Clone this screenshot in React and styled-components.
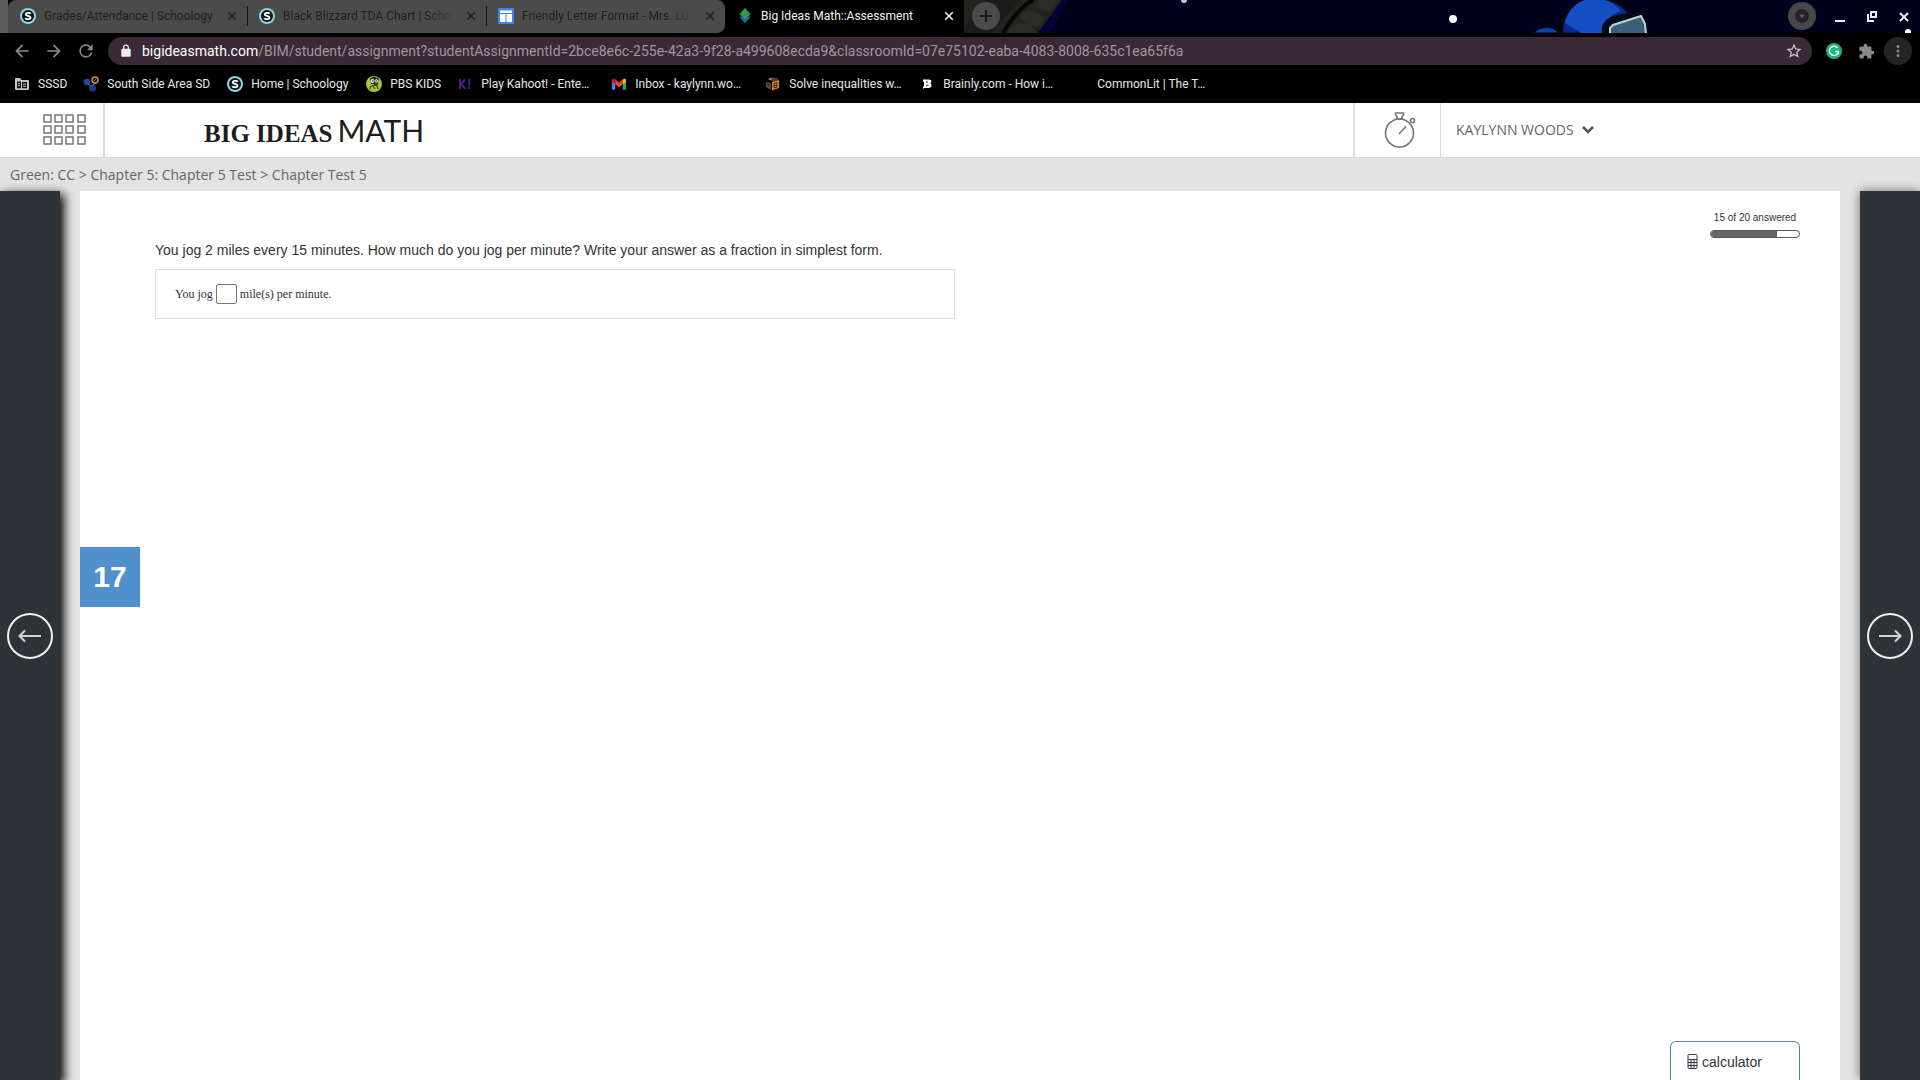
import React from "react";
import styled, { createGlobalStyle, css } from "styled-components";

const GlobalStyle = createGlobalStyle`
  *, *::before, *::after { box-sizing: border-box; }
  html, body, #root { height: 100%; }
  body {
    margin: 0;
    overflow: hidden;
    background: #e3e3e3;
    font-family: "Liberation Sans", Arial, sans-serif;
  }
  button { font: inherit; color: inherit; cursor: pointer; }
  svg { flex: none; }
`;

const Screen = styled.div`
  display: flex;
  flex-direction: column;
  height: 100%;
`;

/* ---------- browser chrome ---------- */

const Chrome = styled.div`
  flex: none;
  background: #000;
  color: #e4e4e4;
  font-family: Roboto, sans-serif;
  font-size: 12px;
`;

const TabStrip = styled.div`
  position: relative;
  display: flex;
  align-items: center;
  height: 33px;
  overflow: hidden;
  background: #00001c;
`;

const Wallpaper = styled.svg`
  position: absolute;
  top: 0;
  left: 0;
  width: 1920px;
  height: 33px;
`;

const TabList = styled.div`
  position: relative;
  display: flex;
  height: 33px;
  padding-left: 8px;
  background: linear-gradient(to right, #5c5c5c 8px, #000 8px);
`;

const Tab = styled.div`
  display: flex;
  align-items: center;
  gap: 8px;
  width: 239px;
  height: 33px;
  padding: 0 7px 2px 12px;
  background: ${(p) => (p.$active ? "#000" : "#4b4b4b")};
  color: ${(p) => (p.$active ? "#f2f2f2" : "#1f1f1f")};
  border-radius: ${(p) => (p.$first ? "8px 0 0 0" : p.$last ? "0 8px 8px 0" : "0")};
`;

const TabDivider = styled.span`
  width: 1px;
  height: 20px;
  margin: 6px -1px 0 0;
  background: #151515;
  z-index: 1;
`;

const TabTitle = styled.span`
  flex: 1;
  min-width: 0;
  white-space: nowrap;
  line-height: 16px;
  ${(p) => p.$faded && css`mask-image: linear-gradient(to right, #000 calc(100% - 28px), transparent);`}
`;

const IconButton = styled.button`
  display: flex;
  flex: none;
  align-items: center;
  justify-content: center;
  width: ${(p) => p.$size || 32}px;
  height: ${(p) => p.$size || 32}px;
  margin: 0 ${(p) => p.$inset || 0}px;
  padding: 0;
  border: 0;
  border-radius: 50%;
  background: ${(p) => p.$fill || "transparent"};
`;

const StripEnd = styled.div`
  position: relative;
  display: flex;
  flex: 1;
  align-items: center;
  height: 33px;
  padding: 0 0 1px 8px;
`;

const WindowControls = styled.div`
  display: flex;
  align-items: center;
  margin-left: auto;
  color: #f0f0f8;
`;

const ProfileGap = styled.span`
  width: 8px;
`;

const Toolbar = styled.div`
  display: flex;
  align-items: center;
  height: 36px;
  padding: 0 6px;
  color: #8a8a8a;
`;

const AddressBar = styled.div`
  display: flex;
  flex: 1;
  align-items: center;
  gap: 9px;
  height: 28px;
  margin: 0 6px;
  padding: 0 2px 0 11px;
  border-radius: 14px;
  background: #392a36;
  color: #cfc8cd;
`;

const Address = styled.div`
  flex: 1;
  font-size: 14px;
  line-height: 20px;
  color: #a0969d;
  white-space: nowrap;
  outline: 0;
`;

const Host = styled.span`
  color: #fff;
`;

const BookmarkBar = styled.nav`
  display: flex;
  gap: 16px;
  height: 34px;
  padding: 0 14px 4px;
`;

const Bookmark = styled.a`
  display: flex;
  align-items: center;
  gap: 8px;
  min-width: ${(p) => p.$width}px;
  color: #e6e6e6;
  text-decoration: none;
  white-space: nowrap;
`;

/* ---------- site header ---------- */

const SiteHeader = styled.header`
  display: flex;
  flex: none;
  height: 54px;
  background: #fff;
  color: #666;
`;

const MenuButton = styled.button`
  display: flex;
  align-items: center;
  justify-content: flex-end;
  width: 105px;
  padding: 0 17px 2px 0;
  border: 0;
  border-right: 2px solid #ddd;
  background: none;
`;

const Brand = styled.a`
  display: flex;
  flex: 1;
  align-items: baseline;
  gap: 5px;
  padding: 7px 0 0 99px;
  color: #1d1d1d;
  text-decoration: none;
  white-space: nowrap;
`;

const BrandBold = styled.span`
  font: bold 25px/40px "Liberation Serif", serif;
`;

const BrandLight = styled.span`
  font: 400 30px/40px Lato, sans-serif;
`;

const TimerButton = styled.button`
  display: flex;
  align-items: center;
  justify-content: center;
  width: 88px;
  padding: 0 0 0 4px;
  border: 0;
  border-left: 2px solid #ddd;
  border-right: 1px solid #ddd;
  background: none;
`;

const UserButton = styled.button`
  display: flex;
  align-items: center;
  gap: 8px;
  width: 479px;
  padding: 0 0 0 15px;
  border: 0;
  background: none;
  && {
    font: 14px/20px "Open Sans", sans-serif;
    color: #666;
  }
`;

const Breadcrumb = styled.nav`
  flex: none;
  height: 34px;
  padding: 7px 10px 0;
  border-top: 1px solid #d8d8d8;
  background: #e3e3e3;
  font: 14px/20px "Open Sans", sans-serif;
  color: #666;
`;

/* ---------- assessment ---------- */

const Stage = styled.div`
  display: flex;
  flex: 1;
  min-height: 0;
  gap: 20px;
  background: #e3e3e3;
`;

const SideNav = styled.div`
  display: flex;
  flex: none;
  align-items: center;
  justify-content: center;
  width: 60px;
  background: #2e3337;
  box-shadow: ${(p) => (p.$side === "left" ? "3px 4px 10px 1px #000" : "0 0 10px rgba(0, 0, 0, 0.5)")};
`;

const ArrowButton = styled.button`
  display: flex;
  align-items: center;
  justify-content: center;
  width: 46px;
  height: 46px;
  padding: 0;
  border: 2px solid #f0f0f0;
  border-radius: 50%;
  background: none;
  && {
    color: #d4d4d4;
  }
`;

const Sheet = styled.main`
  display: flex;
  flex: 1;
  background: #fff;
  z-index: 1;
`;

const QuestionNumber = styled.div`
  display: flex;
  align-items: center;
  justify-content: center;
  width: 60px;
  height: 60px;
  margin-top: 356px;
  background: #4f90cd;
  color: #fff;
  font-size: 30px;
  font-weight: bold;
`;

const QuestionArea = styled.section`
  flex: 1;
  padding: 49px 0 0 15px;
`;

const Prompt = styled.p`
  margin: 0 0 9px;
  font-size: 14px;
  line-height: 20px;
  color: #333;
`;

const AnswerBox = styled.label`
  display: flex;
  align-items: center;
  gap: 3px;
  width: 800px;
  height: 50px;
  padding-left: 19px;
  border: 1px solid #ddd;
  font: 12px/16px "Liberation Serif", serif;
  color: #333;
`;

const AnswerInput = styled.input`
  width: 21px;
  height: 20px;
  padding: 0 2px;
  border: 1px solid #777;
  border-radius: 2px;
  background: #fff;
  font: inherit;
`;

const Aside = styled.aside`
  display: flex;
  flex-direction: column;
  align-items: flex-end;
  justify-content: space-between;
  padding: 20px 40px 0 0;
`;

const Progress = styled.div`
  width: 90px;
  font-size: 10px;
  line-height: 14px;
  text-align: center;
  color: #333;
  white-space: nowrap;
`;

const ProgressTrack = styled.div`
  height: 8px;
  margin-top: 5px;
  overflow: hidden;
  border: 1px solid #555;
  border-radius: 4px;
`;

const ProgressFill = styled.div`
  height: 100%;
  background: #666;
`;

const CalculatorButton = styled.button`
  display: flex;
  align-items: center;
  gap: 4px;
  width: 130px;
  height: 39px;
  padding: 1px 0 0 16px;
  border: 1px solid #5087a8;
  border-bottom: 0;
  border-radius: 6px 6px 0 0;
  background: #fff;
  && {
    font-size: 14px;
    color: #2f3640;
  }
`;

/* ---------- drawings ---------- */

const SchoologyIcon = () => (
  <svg width="16" height="16" viewBox="0 0 16 16" aria-hidden="true">
    <circle cx="8" cy="8" r="8" fill="#8fd3e8" />
    <circle cx="8" cy="8" r="6" fill="#0b1118" />
    <path d="M10.700 5.700C10 4.600 5.800 4.300 5.800 6.400c0 2 4.700 1 4.700 3.200 0 2.200-4.500 1.900-5.300.5" fill="none" stroke="#fff" strokeWidth="1.900" />
  </svg>
);

const SitesIcon = () => (
  <svg width="16" height="16" viewBox="0 0 16 16" aria-hidden="true">
    <rect width="16" height="16" rx="1" fill="#4285e8" />
    <path d="M2 2.500h12v2.500H2zM2 6h5.500v8H2zM8.500 6H14v8H8.500z" fill="#fff" />
  </svg>
);

const BigIdeasIcon = () => (
  <svg width="16" height="16" viewBox="0 0 16 16" aria-hidden="true">
    <path d="M2.500 9.500h11L8 15.500z" fill="#123f8f" />
    <path d="M2.500 8.500h11L8 15z" fill="#1b62b0" />
    <path d="M8 0l5.500 6L8 11.500 2.500 6z" fill="#2f9a48" />
  </svg>
);

const CloseIcon = () => (
  <svg width="16" height="16" viewBox="0 0 16 16" fill="none" stroke="currentColor" strokeWidth="1.600" aria-hidden="true">
    <path d="M4.200 4.200l7.600 7.600M11.800 4.200l-7.600 7.600" />
  </svg>
);

const MaterialIcon = ({ d, size = 18 }) => (
  <svg width={size} height={size} viewBox="0 0 24 24" fill="currentColor" aria-hidden="true">
    <path d={d} />
  </svg>
);

const BACK = "M20 11H7.830l5.590-5.590L12 4l-8 8 8 8 1.410-1.410L7.830 13H20v-2z";
const FORWARD = "M12 4l-1.410 1.410L16.170 11H4v2h12.170l-5.580 5.590L12 20l8-8z";
const RELOAD = "M17.650 6.350A7.960 7.960 0 0 0 12 4a8 8 0 1 0 7.730 10h-2.080A6 6 0 1 1 12 6c1.660 0 3.140.690 4.220 1.780L13 11h7V4l-2.350 2.350z";
const LOCK = "M18 8h-1V6A5 5 0 0 0 7 6v2H6a2 2 0 0 0-2 2v10a2 2 0 0 0 2 2h12a2 2 0 0 0 2-2V10a2 2 0 0 0-2-2zM9 6a3 3 0 0 1 6 0v2H9V6z";
const STAR = "M22 9.240l-7.190-.620L12 2 9.190 8.630 2 9.240l5.460 4.730L5.820 21 12 17.270 18.180 21l-1.630-7.030L22 9.240zM12 15.400l-3.760 2.270 1-4.280-3.320-2.880 4.380-.380L12 6.100l1.710 4.040 4.380.380-3.320 2.880 1 4.280L12 15.400z";
const PUZZLE = "M20.500 11H19V7a2 2 0 0 0-2-2h-4V3.500a2.500 2.500 0 0 0-5 0V5H4a2 2 0 0 0-2 2v3.800h1.500a2.700 2.700 0 0 1 0 5.400H2V20a2 2 0 0 0 2 2h3.800v-1.500a2.700 2.700 0 0 1 5.400 0V22H17a2 2 0 0 0 2-2v-4h1.500a2.500 2.500 0 0 0 0-5z";
const MORE = "M12 8a2 2 0 1 0 0-4 2 2 0 0 0 0 4zm0 2a2 2 0 1 0 0 4 2 2 0 0 0 0-4zm0 6a2 2 0 1 0 0 4 2 2 0 0 0 0-4z";

const FolderIcon = () => (
  <svg width="16" height="16" viewBox="0 0 16 16" aria-hidden="true">
    <path d="M1 3.200c0-.7.500-1.200 1.200-1.200H6l1.500 2h6.300c.7 0 1.200.5 1.200 1.200v7.600c0 .7-.5 1.200-1.200 1.200H2.200c-.7 0-1.200-.5-1.200-1.200z" fill="#c4c4c4" />
    <path d="M3 5.500h4v6.700H3zM8 6h5v6.200H8z" fill="#111" />
    <path d="M4 7h2v1H4zM4 9h2v1H4zM9 7.500h3v1H9zM9 9.800h3v1H9zM7 5.500h1v7H7z" fill="#c4c4c4" />
  </svg>
);

const DistrictIcon = () => (
  <svg width="16" height="16" viewBox="0 0 16 16" aria-hidden="true">
    <circle cx="4" cy="6" r="3.300" fill="#1c4aa6" />
    <circle cx="9.500" cy="12" r="3.500" fill="#163f93" />
    <circle cx="12" cy="4" r="3" fill="none" stroke="#d08a4c" strokeWidth="1.500" />
    <path d="M10.500 5.500l3-3M5 8l3 2M11 7l-1 3" stroke="#a6734d" strokeWidth="1" />
  </svg>
);

const PbsIcon = () => (
  <svg width="16" height="16" viewBox="0 0 16 16" aria-hidden="true">
    <circle cx="8" cy="8" r="8" fill="#a5c63b" />
    <path d="M4 2.500l4-2 5 2-1 5.500H5z" fill="#27301b" />
    <circle cx="6.500" cy="5" r="1.900" fill="#fff" />
    <circle cx="10.500" cy="5" r="1.700" fill="#fff" />
    <circle cx="6.800" cy="5" r=".8" />
    <circle cx="10.200" cy="5" r=".8" />
    <path d="M4 13c0-5 8-5 8 0M7 10l2 3M8 8l4 1" stroke="#35451a" strokeWidth="1.200" fill="none" />
  </svg>
);

const KahootIcon = () => (
  <svg width="16" height="16" viewBox="0 0 16 16" fill="none" stroke="#482087" strokeWidth="2" aria-hidden="true">
    <path d="M3 3v10M8 3.500L4 8l4.500 5M12.500 2.500l-.5 7M11.500 11v2" />
  </svg>
);

const GmailIcon = () => (
  <svg width="16" height="16" viewBox="0 0 16 16" aria-hidden="true">
    <path d="M1 4.500v8.300c0 .5.400.9.900.9H4.200V7z" fill="#4285f4" />
    <path d="M15 4.500v8.300c0 .5-.4.9-.9.9h-2.300V7z" fill="#34a853" />
    <path d="M4.200 8.300V3.500L8 6.400l3.800-2.900v4.800L8 11.200z" fill="#ea4335" />
    <path d="M1 4.200C1 2.500 2.800 2.200 4.200 3.500v4.800L1 6z" fill="#c5221f" />
    <path d="M15 4.200c0-1.700-1.800-2-3.200-.7v4.800L15 6z" fill="#fbbc04" />
  </svg>
);

const CubeIcon = () => (
  <svg width="16" height="16" viewBox="0 0 16 16" aria-hidden="true">
    <path d="M2 3l6-2 6 2-5 3z" fill="#4c3b2c" />
    <path d="M7 6l7-2v8l-7 2.500z" fill="#c98b3c" />
    <path d="M1 6l5 1v7l-5-3z" fill="#5d452e" />
    <path d="M9 7.500l3-.8v4.500l-3 .8zM9 9.500h3M2 8l3 1" stroke="#38240f" fill="none" />
    <path d="M4 3h3" stroke="#c8b79c" />
  </svg>
);

const BrainlyIcon = () => (
  <svg width="16" height="16" viewBox="0 0 16 16" aria-hidden="true">
    <path d="M4 3.500h6c3 0 3 3 1.200 4C13.500 8.500 13 12 9.500 12H5l-1 1V11l1-1V6L4 5.500z" fill="#fff" />
    <path d="M7 6h2M7 9.300h2.500" stroke="#222" />
  </svg>
);

const BlankIcon = () => <svg width="16" height="16" aria-hidden="true" />;

const tabs = [
  { title: "Grades/Attendance | Schoology", Icon: SchoologyIcon },
  { title: "Black Blizzard TDA Chart | Scho", Icon: SchoologyIcon, faded: true },
  { title: "Friendly Letter Format - Mrs. Lun", Icon: SitesIcon, faded: true },
  { title: "Big Ideas Math::Assessment", Icon: BigIdeasIcon, active: true },
];

const bookmarks = [
  { label: "SSSD", Icon: FolderIcon, width: 53 },
  { label: "South Side Area SD", Icon: DistrictIcon, width: 128 },
  { label: "Home | Schoology", Icon: SchoologyIcon, width: 123 },
  { label: "PBS KIDS", Icon: PbsIcon, width: 75 },
  { label: "Play Kahoot! - Ente…", Icon: KahootIcon, width: 138 },
  { label: "Inbox - kaylynn.wo…", Icon: GmailIcon, width: 138 },
  { label: "Solve inequalities w…", Icon: CubeIcon, width: 138 },
  { label: "Brainly.com - How i…", Icon: BrainlyIcon, width: 138 },
  { label: "CommonLit | The T…", Icon: BlankIcon, width: 138 },
];

const NightSky = () => (
  <Wallpaper viewBox="0 0 1920 33" preserveAspectRatio="xMinYMin slice" aria-hidden="true">
    <path d="M960 0h102l-24 33h-78z" fill="#22231f" />
    <path d="M962 33l12-20 12-13h34l-28 33z" fill="#1b1c19" />
    <path d="M1003 33c8-14 18-26 30-33" stroke="#060605" strokeWidth="4" fill="none" />
    <path d="M1013 26c8-5 18-4 24 7h-30z" fill="#2b2d25" />
    <path d="M1021 15c4-5 10-5 16-2 6 2 9 4 5 9-3 6-6 6-11 3-6-3-13-4-10-10z" fill="#2b2d25" />
    <path d="M1034 3l4-3h20c-2 6-6 11-9 12-6-4-15-3-15-9z" fill="#2b2d25" />
    <path d="M1062 0h6l-18 33h-12z" fill="#020238" />
    <circle cx="1184" cy="0" r="3" fill="#c8c8dc" />
    <circle cx="1453" cy="19" r="4" fill="#fff" />
    <circle cx="1908" cy="32" r="3" fill="#fff" />
    <path d="M1532 34c6-10 24-10 28 0z" fill="#0f40ae" stroke="#020512" strokeWidth="3" />
    <path d="M1562 34c-2-20 12-35 34-36 18 0 30 8 36 20l-20 16z" fill="#0a2a8f" stroke="#020512" strokeWidth="3" />
    <path d="M1565 23c4-18 18-26 34-24 12 2 18 7 22 12-12 4-16 10-18 22h-22z" fill="#1450c4" />
    <path d="M1602 34c-2-12 6-18 20-20l16-2c8 6 11 13 11 22z" fill="#020a18" />
    <path d="M1610 34v-6l3-3 28-9 4 5 1 13z" fill="#3c6076" />
    <path d="M1610 34v-6l3-3 28-9 4 8 1 10" fill="none" stroke="#b8d5d4" strokeWidth="2" />
  </Wallpaper>
);

export default function App() {
  return (
    <Screen>
      <GlobalStyle />
      <Chrome>
        <TabStrip>
          <NightSky />
          <TabList role="tablist">
            {tabs.map(({ title, Icon, active, faded }, i) => (
              <React.Fragment key={title}>
                <Tab role="tab" aria-selected={!!active} $active={active} $first={i === 0} $last={i === 2}>
                  <Icon />
                  <TabTitle $faded={faded}>{title}</TabTitle>
                  <IconButton $size={16} aria-label="Close tab"><CloseIcon /></IconButton>
                </Tab>
                {i < 2 && <TabDivider />}
              </React.Fragment>
            ))}
          </TabList>
          <StripEnd>
            <IconButton $size={28} $fill="#4b4b4b" aria-label="New tab">
              <svg width="14" height="14" viewBox="0 0 14 14" stroke="#1b1b1b" strokeWidth="2" aria-hidden="true">
                <path d="M7 1v12M1 7h12" />
              </svg>
            </IconButton>
            <WindowControls>
              <IconButton $size={28} $fill="#484848" aria-label="Search tabs">
                <svg width="14" height="14" viewBox="0 0 14 14" aria-hidden="true">
                  <circle cx="7" cy="7" r="7" fill="#2a2028" />
                  <path d="M4 5.500h6L7 9z" fill="#665d64" />
                </svg>
              </IconButton>
              <ProfileGap />
              <IconButton aria-label="Minimize">
                <svg width="12" height="12" viewBox="0 0 12 12" aria-hidden="true">
                  <path d="M1 10h10v2H1z" fill="currentColor" />
                </svg>
              </IconButton>
              <IconButton aria-label="Restore">
                <svg width="12" height="12" viewBox="0 0 12 12" fill="none" stroke="currentColor" strokeWidth="2" aria-hidden="true">
                  <path d="M5 2h5v5H5zM2 4v7h6" />
                </svg>
              </IconButton>
              <IconButton aria-label="Close window">
                <svg width="12" height="12" viewBox="0 0 12 12" stroke="currentColor" strokeWidth="2" aria-hidden="true">
                  <path d="M2 3l8 8M10 3l-8 8" />
                </svg>
              </IconButton>
            </WindowControls>
          </StripEnd>
        </TabStrip>

        <Toolbar>
          <IconButton aria-label="Back"><MaterialIcon d={BACK} size={20} /></IconButton>
          <IconButton aria-label="Forward"><MaterialIcon d={FORWARD} size={20} /></IconButton>
          <IconButton aria-label="Reload"><MaterialIcon d={RELOAD} size={20} /></IconButton>
          <AddressBar>
            <svg width="14" height="14" viewBox="0 0 24 24" fill="#f0eef0" aria-hidden="true"><path d={LOCK} /></svg>
            <Address role="textbox" aria-label="Address" contentEditable suppressContentEditableWarning spellCheck={false}>
              <Host>bigideasmath.com</Host>
              /BIM/student/assignment?studentAssignmentId=2bce8e6c-255e-42a3-9f28-a499608ecda9&amp;classroomId=07e75102-eaba-4083-8008-635c1ea65f6a
            </Address>
            <IconButton aria-label="Bookmark this page"><MaterialIcon d={STAR} size={18} /></IconButton>
          </AddressBar>
          <IconButton aria-label="Grammarly">
            <svg width="16" height="16" viewBox="0 0 16 16" aria-hidden="true">
              <circle cx="8" cy="8" r="8" fill="#18b583" />
              <path d="M11.500 4.900A4.600 4.600 0 1 0 12.500 8.500H9M12.400 8.500v3" fill="none" stroke="#fff" strokeWidth="1.400" />
            </svg>
          </IconButton>
          <IconButton aria-label="Extensions"><MaterialIcon d={PUZZLE} size={17} /></IconButton>
          <IconButton $size={28} $inset={2} $fill="#242424" aria-label="Menu"><MaterialIcon d={MORE} size={18} /></IconButton>
        </Toolbar>

        <BookmarkBar aria-label="Bookmarks">
          {bookmarks.map(({ label, Icon, width }) => (
            <Bookmark href="#" key={label} $width={width}><Icon />{label}</Bookmark>
          ))}
        </BookmarkBar>
      </Chrome>

      <SiteHeader>
        <MenuButton aria-label="Menu">
          <svg width="43" height="31" viewBox="0 0 43 31" fill="none" stroke="#777" strokeWidth="1.500" aria-hidden="true">
            {[0, 11, 22].map((y) => [0, 11, 22, 34].map((x) => (
              <rect key={`${x}-${y}`} x={x + 1} y={y + 1} width="7" height="7" />
            )))}
          </svg>
        </MenuButton>
        <Brand href="#">
          <BrandBold>BIG IDEAS</BrandBold>
          <BrandLight>MATH</BrandLight>
        </Brand>
        <TimerButton aria-label="Timer">
          <svg width="32" height="36" viewBox="0 0 32 36" fill="none" stroke="#777" strokeWidth="1.600" aria-hidden="true">
            <circle cx="15.500" cy="21" r="14" />
            <path d="M11.500 1h8v2l-1.500 1.500V7h-5V4.500L11.500 3zM15 22l7-7.500" />
            <circle cx="28.500" cy="8.500" r="2" />
          </svg>
        </TimerButton>
        <UserButton>
          KAYLYNN WOODS
          <svg width="12" height="8" viewBox="0 0 12 8" fill="none" stroke="#555" strokeWidth="2.500" aria-hidden="true">
            <path d="M1 1l5 5 5-5" />
          </svg>
        </UserButton>
      </SiteHeader>

      <Breadcrumb aria-label="Breadcrumb">Green: CC &gt; Chapter 5: Chapter 5 Test &gt; Chapter Test 5</Breadcrumb>

      <Stage>
        <SideNav $side="left">
          <ArrowButton aria-label="Previous question">
            <svg width="24" height="14" viewBox="0 0 24 14" fill="none" stroke="currentColor" strokeWidth="2" aria-hidden="true">
              <path d="M1.500 7H23M7 1.500L1.500 7 7 12.500" />
            </svg>
          </ArrowButton>
        </SideNav>
        <Sheet>
          <QuestionNumber>17</QuestionNumber>
          <QuestionArea>
            <Prompt>You jog 2 miles every 15 minutes. How much do you jog per minute? Write your answer as a fraction in simplest form.</Prompt>
            <AnswerBox>
              <span>You jog</span>
              <AnswerInput type="text" aria-label="Miles per minute" />
              <span>mile(s) per minute.</span>
            </AnswerBox>
          </QuestionArea>
          <Aside>
            <Progress>
              15 of 20 answered
              <ProgressTrack><ProgressFill style={{ width: `${(15 / 20) * 100}%` }} /></ProgressTrack>
            </Progress>
            <CalculatorButton>
              <svg width="11" height="15" viewBox="0 0 11 15" fill="none" stroke="#333a44" aria-hidden="true">
                <rect x="1" y=".5" width="9" height="14" rx="1" />
                <path d="M1 5.500h9M1 8.500h9M1 11.500h9M4 5.500v9M7 5.500v9" />
              </svg>
              calculator
            </CalculatorButton>
          </Aside>
        </Sheet>
        <SideNav $side="right">
          <ArrowButton aria-label="Next question">
            <svg width="24" height="14" viewBox="0 0 24 14" fill="none" stroke="currentColor" strokeWidth="2" aria-hidden="true">
              <path d="M1 7h21.500M17 1.500L22.500 7 17 12.500" />
            </svg>
          </ArrowButton>
        </SideNav>
      </Stage>
    </Screen>
  );
}
